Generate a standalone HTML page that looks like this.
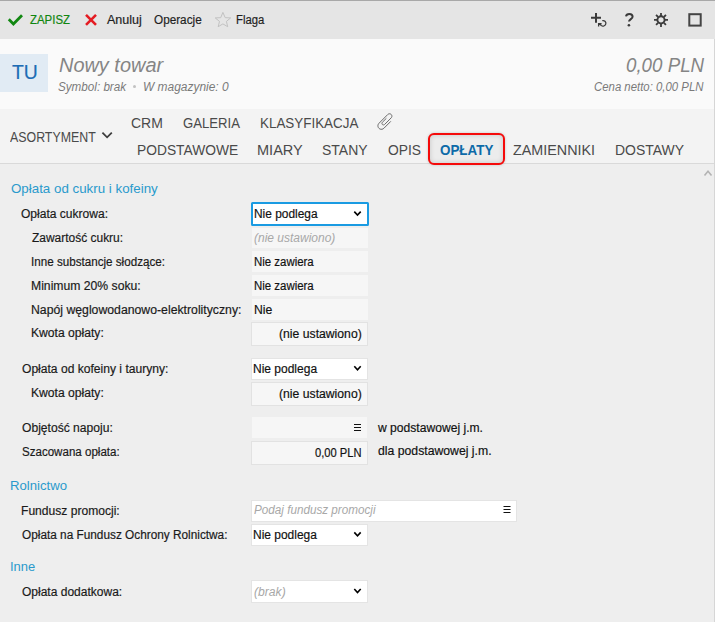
<!DOCTYPE html>
<html><head><meta charset="utf-8">
<style>
*{margin:0;padding:0;box-sizing:border-box}
html,body{width:715px;height:622px;overflow:hidden;background:#eeeeee;font-family:"Liberation Sans",sans-serif;position:relative}
.a{position:absolute}
.t{position:absolute;white-space:nowrap;transform-origin:0 0}
.sk{-webkit-text-stroke:0.18px currentColor}
svg{position:absolute;overflow:visible}
.ro{position:absolute;background:#f6f6f6}
.bx{position:absolute;background:#f6f6f6;border:1px solid #e2e2e2}
.wb{position:absolute;background:#fff;border:1px solid #e4e4e4}
</style></head><body>
<!-- top line + toolbar -->
<div class="a" style="left:0;top:0;width:715px;height:1px;background:#a8a8a8"></div>
<div class="a" style="left:0;top:1px;width:715px;height:38px;background:#e5e5e5"></div>
<!-- header -->
<div class="a" style="left:0;top:39px;width:714px;height:70px;background:#fafafa"></div>
<div class="a" style="left:0;top:54px;width:48px;height:38px;background:#e1ebf4"></div>
<!-- tabs -->
<div class="a" style="left:0;top:109px;width:714px;height:54px;background:#f3f3f3"></div>
<div class="a" style="left:0;top:163px;width:714px;height:1px;background:#d9d9d9"></div>
<!-- right border -->
<div class="a" style="left:714px;top:39px;width:1px;height:583px;background:#d6d6d6"></div>
<!-- red highlight -->
<div class="a" style="left:428.4px;top:133px;width:77px;height:32.2px;border:2.3px solid #f50a0a;border-radius:6px;background:#ececec;box-shadow:inset 0 0 5px rgba(0,0,0,0.16),0 0 3px rgba(0,0,0,0.18)"></div>

<!-- form boxes -->
<div class="a" style="left:250.5px;top:201.5px;width:118px;height:24px;background:#fff;border:2px solid #1a9be2;border-radius:1.5px"></div>
<div class="ro" style="left:252px;top:227.5px;width:115.5px;height:20.5px"></div>
<div class="ro" style="left:252px;top:251px;width:115.5px;height:21px"></div>
<div class="ro" style="left:252px;top:275px;width:115.5px;height:21px"></div>
<div class="ro" style="left:252px;top:299px;width:115.5px;height:21px"></div>
<div class="bx" style="left:251px;top:322px;width:117px;height:24px"></div>
<div class="wb" style="left:251px;top:357.5px;width:116.5px;height:22px"></div>
<div class="bx" style="left:251px;top:381.5px;width:117px;height:24px"></div>
<div class="ro" style="left:252px;top:417px;width:115px;height:21px"></div>
<div class="bx" style="left:251px;top:440.5px;width:117px;height:24px"></div>
<div class="wb" style="left:251px;top:500px;width:266px;height:21.5px"></div>
<div class="wb" style="left:251px;top:523.5px;width:116.5px;height:22px"></div>
<div class="wb" style="left:251px;top:580px;width:117px;height:22.5px"></div>

<!-- icons -->
<svg style="left:0;top:0" width="715" height="622" viewBox="0 0 715 622">
  <!-- check -->
  <polyline points="8.8,19.3 13.4,23.9 22,15.3" fill="none" stroke="#128812" stroke-width="2.8" stroke-linecap="butt"/>
  <!-- X -->
  <path d="M86,14.9 L96,24.9 M96,14.9 L86,24.9" stroke="#e41c23" stroke-width="2.6"/>
  <!-- star -->
  <polygon points="222.9,12.4 225.2,17.7 230.7,17.9 226.4,21.4 227.7,26.7 222.9,23.9 218.2,26.7 219.5,21.4 215.2,17.9 220.7,17.7" fill="none" stroke="#bdbdbd" stroke-width="0.9" stroke-linejoin="round"/>
  <!-- plus -->
  <path d="M591,17.8 H601 M596,13 V22.8" stroke="#3a3a3a" stroke-width="2"/>
  <!-- small refresh -->
  <path d="M602.3,20.65 A2.8,2.8 0 1 1 601.2,25.4" fill="none" stroke="#3a3a3a" stroke-width="1.25"/>
  <path d="M598.6,26.6 V23.6 H601.6 M598.6,23.6 L601.4,25.6" fill="none" stroke="#3a3a3a" stroke-width="1.25"/>
  <!-- ? -->
  <path d="M626,16.4 C626.3,14.7 627.7,13.9 629.3,13.9 C631.3,13.9 632.6,15.1 632.6,16.7 C632.6,18.9 629,19.4 629,21.6" fill="none" stroke="#3a3a3a" stroke-width="2"/>
  <circle cx="628.9" cy="25.3" r="1.3" fill="#3a3a3a"/>
  <!-- gear -->
  <g transform="translate(661,19.9)">
    <circle r="3.6" fill="none" stroke="#3c3c3c" stroke-width="1.9"/>
    <g stroke="#3c3c3c" stroke-width="1.8">
      <path d="M0,-7 V-4 M0,7 V4 M-7,0 H-4 M7,0 H4"/>
      <path d="M-4.95,-4.95 L-2.9,-2.9 M4.95,4.95 L2.9,2.9 M-4.95,4.95 L-2.9,2.9 M4.95,-4.95 L2.9,-2.9"/>
    </g>
  </g>
  <!-- square -->
  <rect x="689.3" y="14.2" width="11.4" height="11.4" fill="none" stroke="#444" stroke-width="2"/>
  <!-- asortyment chevron -->
  <polyline points="102.4,132.6 107.1,137.3 111.8,132.6" fill="none" stroke="#3e3e3e" stroke-width="1.8"/>
  <!-- paperclip -->
  <path d="M386.36,118.31 L382.39,122.28 L382.11,122.67 L381.96,123.13 L381.96,123.61 L382.11,124.08 L382.39,124.47 L382.78,124.75 L383.25,124.90 L383.73,124.90 L384.19,124.75 L384.58,124.47 L391.20,117.86 L391.64,117.25 L391.87,116.54 L391.87,115.78 L391.64,115.07 L391.20,114.46 L390.59,114.02 L389.87,113.79 L389.12,113.79 L388.41,114.02 L387.80,114.46 L378.93,123.34 L378.28,124.22 L377.95,125.26 L377.95,126.36 L378.28,127.40 L378.93,128.29 L379.81,128.93 L380.85,129.27 L381.95,129.27 L382.99,128.93 L383.88,128.29 L390.83,121.34" fill="none" stroke="#6a6a6a" stroke-width="1" stroke-linejoin="round"/>
  <!-- scroll up chevron -->
  <polyline points="704.5,175.5 708,171.3 711.5,175.5" fill="none" stroke="#b3b3b3" stroke-width="1.6"/>
  <!-- select chevrons -->
  <polyline points="354.3,211.6 357.5,215.1 360.7,211.6" fill="none" stroke="#000" stroke-width="1.6"/>
  <polyline points="354.3,366.2 357.5,369.7 360.7,366.2" fill="none" stroke="#000" stroke-width="1.6"/>
  <polyline points="354.3,532.4 357.5,535.9 360.7,532.4" fill="none" stroke="#000" stroke-width="1.6"/>
  <polyline points="354.3,589.0 357.5,592.5 360.7,589.0" fill="none" stroke="#000" stroke-width="1.6"/>
  <!-- hamburger -->
  <path d="M354,424.5 H361 M354,427.5 H361 M354,430.5 H361" stroke="#111" stroke-width="1"/>
  <path d="M503.5,506.5 H510.5 M503.5,509.5 H510.5 M503.5,512.5 H510.5" stroke="#111" stroke-width="1"/>
  <!-- bullet -->
  <circle cx="134.5" cy="86.4" r="1.5" fill="#c2c2c2"/>
</svg>
<span class="t sk" id="zapisz" style="left:29.79px;top:14.04px;font-size:12px;line-height:12px;color:#108610;transform:scaleX(0.9525);">ZAPISZ</span>
<span class="t sk" id="anuluj" style="left:106.64px;top:14.04px;font-size:12px;line-height:12px;color:#1f1f1f;transform:scaleX(1.0449);">Anuluj</span>
<span class="t sk" id="operacje" style="left:153.72px;top:14.04px;font-size:12px;line-height:12px;color:#1f1f1f;transform:scaleX(0.9792);">Operacje</span>
<span class="t sk" id="flaga" style="left:236.06px;top:14.04px;font-size:12px;line-height:12px;color:#1f1f1f;transform:scaleX(0.9411);">Flaga</span>
<span class="t sk" id="tu" style="left:12.05px;top:62.07px;font-size:20px;line-height:20px;color:#1d6db5;transform:scaleX(0.9682);">TU</span>
<span class="t" id="nowy" style="left:58.84px;top:54.57px;font-size:20px;line-height:20px;color:#858585;font-style:italic;transform:scaleX(0.9965);">Nowy towar</span>
<span class="t" id="symbol" style="left:57.61px;top:81.14px;font-size:12px;line-height:12px;color:#7a7a7a;font-style:italic;transform:scaleX(0.9722);">Symbol: brak</span>
<span class="t" id="wmag" style="left:143.47px;top:81.14px;font-size:12px;line-height:12px;color:#7a7a7a;font-style:italic;transform:scaleX(0.9951);">W magazynie: 0</span>
<span class="t" id="pln" style="left:625.71px;top:54.87px;font-size:20px;line-height:20px;color:#858585;font-style:italic;transform:scaleX(0.9362);">0,00 PLN</span>
<span class="t" id="cena" style="left:593.86px;top:80.84px;font-size:12px;line-height:12px;color:#7a7a7a;font-style:italic;transform:scaleX(0.9483);">Cena netto: 0,00 PLN</span>
<span class="t" id="asort" style="left:9.82px;top:130.35px;font-size:14px;line-height:14px;color:#4a4a4a;transform:scaleX(0.8840);">ASORTYMENT</span>
<span class="t" id="crm" style="left:131.30px;top:116.15px;font-size:14px;line-height:14px;color:#4a4a4a;transform:scaleX(0.9986);">CRM</span>
<span class="t" id="galeria" style="left:182.64px;top:116.15px;font-size:14px;line-height:14px;color:#4a4a4a;transform:scaleX(0.9377);">GALERIA</span>
<span class="t" id="klas" style="left:259.63px;top:116.15px;font-size:14px;line-height:14px;color:#4a4a4a;transform:scaleX(0.9577);">KLASYFIKACJA</span>
<span class="t" id="podst" style="left:136.61px;top:143.15px;font-size:14px;line-height:14px;color:#4a4a4a;transform:scaleX(0.9850);">PODSTAWOWE</span>
<span class="t" id="miary" style="left:257.36px;top:143.15px;font-size:14px;line-height:14px;color:#4a4a4a;transform:scaleX(1.0377);">MIARY</span>
<span class="t" id="stany" style="left:322.17px;top:143.15px;font-size:14px;line-height:14px;color:#4a4a4a;transform:scaleX(0.9985);">STANY</span>
<span class="t" id="opis" style="left:387.57px;top:143.15px;font-size:14px;line-height:14px;color:#4a4a4a;transform:scaleX(0.9864);">OPIS</span>
<span class="t" id="oplaty" style="left:440.11px;top:143.15px;font-size:14px;line-height:14px;color:#0d6aa8;font-weight:bold;transform:scaleX(0.9577);">OPŁATY</span>
<span class="t" id="zamien" style="left:513.17px;top:143.15px;font-size:14px;line-height:14px;color:#4a4a4a;transform:scaleX(1.0242);">ZAMIENNIKI</span>
<span class="t" id="dost" style="left:614.80px;top:143.15px;font-size:14px;line-height:14px;color:#4a4a4a;transform:scaleX(0.9968);">DOSTAWY</span>
<span class="t" id="s1" style="left:10.79px;top:182.09px;font-size:13px;line-height:13px;color:#2a9acc;transform:scaleX(1.0256);">Opłata od cukru i kofeiny</span>
<span class="t" id="s2" style="left:9.88px;top:478.99px;font-size:13px;line-height:13px;color:#2a9acc;transform:scaleX(1.0125);">Rolnictwo</span>
<span class="t" id="s3" style="left:9.62px;top:559.99px;font-size:13px;line-height:13px;color:#2a9acc;transform:scaleX(0.9982);">Inne</span>
<span class="t sk" id="l1" style="left:21.35px;top:207.64px;font-size:12px;line-height:12px;color:#1a1a1a;transform:scaleX(1.0035);">Opłata cukrowa:</span>
<span class="t sk" id="l2" style="left:31.52px;top:231.54px;font-size:12px;line-height:12px;color:#1a1a1a;transform:scaleX(0.9968);">Zawartość cukru:</span>
<span class="t sk" id="l3" style="left:31.33px;top:255.84px;font-size:12px;line-height:12px;color:#1a1a1a;transform:scaleX(0.9701);">Inne substancje słodzące:</span>
<span class="t sk" id="l4" style="left:31.40px;top:279.54px;font-size:12px;line-height:12px;color:#1a1a1a;transform:scaleX(1.0152);">Minimum 20% soku:</span>
<span class="t sk" id="l5" style="left:31.40px;top:303.84px;font-size:12px;line-height:12px;color:#1a1a1a;transform:scaleX(1.0211);">Napój węglowodanowo-elektrolityczny:</span>
<span class="t sk" id="l6" style="left:31.40px;top:327.34px;font-size:12px;line-height:12px;color:#1a1a1a;transform:scaleX(1.0102);">Kwota opłaty:</span>
<span class="t sk" id="l7" style="left:21.91px;top:362.64px;font-size:12px;line-height:12px;color:#1a1a1a;transform:scaleX(1.0066);">Opłata od kofeiny i tauryny:</span>
<span class="t sk" id="l8" style="left:31.40px;top:387.04px;font-size:12px;line-height:12px;color:#1a1a1a;transform:scaleX(1.0102);">Kwota opłaty:</span>
<span class="t sk" id="l9" style="left:21.91px;top:421.64px;font-size:12px;line-height:12px;color:#1a1a1a;transform:scaleX(1.0078);">Objętość napoju:</span>
<span class="t sk" id="l10" style="left:21.77px;top:445.64px;font-size:12px;line-height:12px;color:#1a1a1a;transform:scaleX(0.9630);">Szacowana opłata:</span>
<span class="t sk" id="l11" style="left:21.41px;top:505.14px;font-size:12px;line-height:12px;color:#1a1a1a;transform:scaleX(1.0064);">Fundusz promocji:</span>
<span class="t sk" id="l12" style="left:21.76px;top:529.44px;font-size:12px;line-height:12px;color:#1a1a1a;transform:scaleX(0.9842);">Opłata na Fundusz Ochrony Rolnictwa:</span>
<span class="t sk" id="l13" style="left:21.75px;top:585.84px;font-size:12px;line-height:12px;color:#1a1a1a;transform:scaleX(1.0008);">Opłata dodatkowa:</span>
<span class="t sk" id="v1" style="left:253.68px;top:207.94px;font-size:12px;line-height:12px;color:#111;transform:scaleX(0.9925);">Nie podlega</span>
<span class="t" id="v2" style="left:253.63px;top:231.64px;font-size:12px;line-height:12px;color:#a8a8a8;font-style:italic;transform:scaleX(0.9997);">(nie ustawiono)</span>
<span class="t sk" id="v3" style="left:253.84px;top:255.64px;font-size:12px;line-height:12px;color:#111;transform:scaleX(0.9528);">Nie zawiera</span>
<span class="t sk" id="v4" style="left:253.84px;top:279.54px;font-size:12px;line-height:12px;color:#111;transform:scaleX(0.9528);">Nie zawiera</span>
<span class="t sk" id="v5" style="left:253.78px;top:303.54px;font-size:12px;line-height:12px;color:#111;transform:scaleX(1.0155);">Nie</span>
<span class="t sk" id="v6" style="left:278.57px;top:328.04px;font-size:12px;line-height:12px;color:#111;transform:scaleX(1.0170);">(nie ustawiono)</span>
<span class="t sk" id="v7" style="left:253.26px;top:362.94px;font-size:12px;line-height:12px;color:#111;transform:scaleX(1.0003);">Nie podlega</span>
<span class="t sk" id="v8" style="left:278.57px;top:387.84px;font-size:12px;line-height:12px;color:#111;transform:scaleX(1.0170);">(nie ustawiono)</span>
<span class="t sk" id="v9" style="left:314.67px;top:446.84px;font-size:12px;line-height:12px;color:#111;transform:scaleX(0.9309);">0,00 PLN</span>
<span class="t sk" id="v10" style="left:378.16px;top:421.54px;font-size:12px;line-height:12px;color:#111;transform:scaleX(1.0091);">w podstawowej j.m.</span>
<span class="t sk" id="v11" style="left:377.75px;top:445.34px;font-size:12px;line-height:12px;color:#111;transform:scaleX(1.0193);">dla podstawowej j.m.</span>
<span class="t" id="v12" style="left:253.95px;top:504.44px;font-size:12px;line-height:12px;color:#a8a8a8;font-style:italic;transform:scaleX(0.9740);">Podaj fundusz promocji</span>
<span class="t sk" id="v13" style="left:253.46px;top:528.94px;font-size:12px;line-height:12px;color:#111;transform:scaleX(0.9970);">Nie podlega</span>
<span class="t" id="v14" style="left:253.89px;top:585.74px;font-size:12px;line-height:12px;color:#a8a8a8;font-style:italic;transform:scaleX(1.0129);">(brak)</span>
</body></html>
